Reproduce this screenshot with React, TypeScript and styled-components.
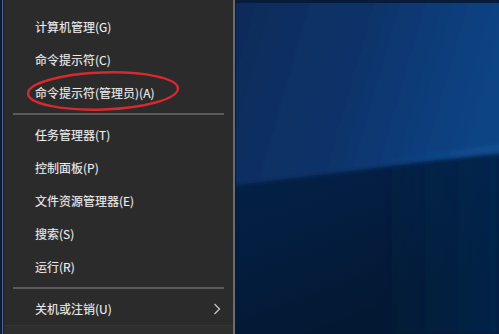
import React from "react";
import styled, { createGlobalStyle } from "styled-components";

const Global = createGlobalStyle`
  html, body { margin: 0; padding: 0; background: #0a2448; overflow: hidden; }
  body { font-family: "Noto Sans CJK SC", "Noto Sans", sans-serif; }
`;

const Screen = styled.div`
  display: flex;
  width: 499px;
  height: 334px;
  background: #0c1c36;
`;

const EdgeStrip = styled.div`
  width: 2px;
  flex: none;
  background: #0d1b33;
  border-right: 1px solid #4d6690;
`;

const Menu = styled.div`
  position: relative;
  flex: none;
  width: 232px;
  height: 334px;
  box-sizing: border-box;
  background: #2b2b2b;
  border-left: 1px solid #221f26;
  border-right: 2px solid #6c6c6c;
  display: flex;
  flex-direction: column;
  padding-top: 10px;
`;

const Item = styled.div`
  height: 33px;
  display: flex;
  align-items: center;
  justify-content: space-between;
  padding: 0 12px 0 31px;
  color: #ececec;
  font-size: 12px;
  white-space: nowrap;
  text-shadow: 0 0 1px rgba(255, 255, 255, 0.3);
`;

const Separator = styled.div`
  height: 9px;
  display: flex;
  align-items: center;
  padding: 0 9px 0 9px;
  &::before {
    content: "";
    flex: 1;
    height: 2px;
    background: #5a5a5a;
  }
`;

const Footer = styled.div`
  flex: 1;
  border-top: 1px solid #333;
  background: #2e2e2e;
`;

const Chevron = styled.svg`
  width: 8px;
  height: 12px;
`;

const Highlight = styled.svg`
  position: absolute;
  left: 0;
  top: 0;
  pointer-events: none;
`;

const DesktopBorder = styled.div`
  width: 1px;
  flex: none;
  background: #1a1a1e;
`;

const Desktop = styled.div`
  flex: 1;
  height: 334px;
  display: flex;
`;

const Wallpaper = styled.svg`
  width: 100%;
  height: 100%;
  display: block;
`;

const items1 = ["计算机管理(G)", "命令提示符(C)", "命令提示符(管理员)(A)"];
const items2 = ["任务管理器(T)", "控制面板(P)", "文件资源管理器(E)", "搜索(S)", "运行(R)"];

export default function App() {
  return (
    <>
      <Global />
      <Screen>
        <EdgeStrip />
        <Menu>
          {items1.map((t) => (
            <Item key={t}>
              <span>{t}</span>
            </Item>
          ))}
          <Separator />
          {items2.map((t) => (
            <Item key={t}>
              <span>{t}</span>
            </Item>
          ))}
          <Separator />
          <Item>
            <span>关机或注销(U)</span>
            <Chevron viewBox="0 0 8 12">
              <path d="M1.5 1 L6.5 6 L1.5 11" fill="none" stroke="#c4c4c4" strokeWidth="1.3" />
            </Chevron>
          </Item>
          <Footer />
          <Highlight width="232" height="130" viewBox="0 0 232 130">
            <ellipse
              cx="99"
              cy="91"
              rx="75"
              ry="18.5"
              fill="none"
              stroke="#d62a2e"
              strokeWidth="2.4"
              transform="rotate(-2 99 91)"
            />
          </Highlight>
        </Menu>
        <DesktopBorder />
        <Desktop>
          <Wallpaper viewBox="0 0 263 334" preserveAspectRatio="none">
            <defs>
              <linearGradient id="lower" x1="0" y1="0" x2="0.3" y2="1">
                <stop offset="0" stopColor="#05264c" />
                <stop offset="0.6" stopColor="#041f44" />
                <stop offset="1" stopColor="#031933" />
              </linearGradient>
              <linearGradient id="upper" x1="0" y1="0" x2="1" y2="0.2">
                <stop offset="0" stopColor="#072b58" />
                <stop offset="0.5" stopColor="#08336a" />
                <stop offset="0.8" stopColor="#093d7a" />
                <stop offset="1" stopColor="#0a4484" />
              </linearGradient>
              <linearGradient id="glow" x1="0" y1="0" x2="1" y2="0">
                <stop offset="0" stopColor="#15529a" stopOpacity="0" />
                <stop offset="1" stopColor="#185aa6" stopOpacity="0.45" />
              </linearGradient>
              <linearGradient id="lowRight" x1="0" y1="0" x2="1" y2="0">
                <stop offset="0" stopColor="#052a55" stopOpacity="0" />
                <stop offset="1" stopColor="#062c58" stopOpacity="0.6" />
              </linearGradient>
              <filter id="soft" x="-0.1" y="-0.1" width="1.2" height="1.2">
                <feGaussianBlur stdDeviation="2" />
              </filter>
            </defs>
            <rect x="0" y="0" width="263" height="334" fill="url(#lower)" />
            <path d="M140 170 L263 155 L263 334 L150 334 Q135 320 140 300 Z" fill="url(#lowRight)" filter="url(#soft)" />
            <polygon points="-5,-5 268,-5 268,152 -5,186" fill="url(#upper)" filter="url(#soft)" />
            <polygon points="150,158 268,144 268,154 150,166" fill="url(#glow)" filter="url(#soft)" />
            <rect x="0" y="0" width="263" height="3" fill="#071c3a" />
          </Wallpaper>
        </Desktop>
      </Screen>
    </>
  );
}
